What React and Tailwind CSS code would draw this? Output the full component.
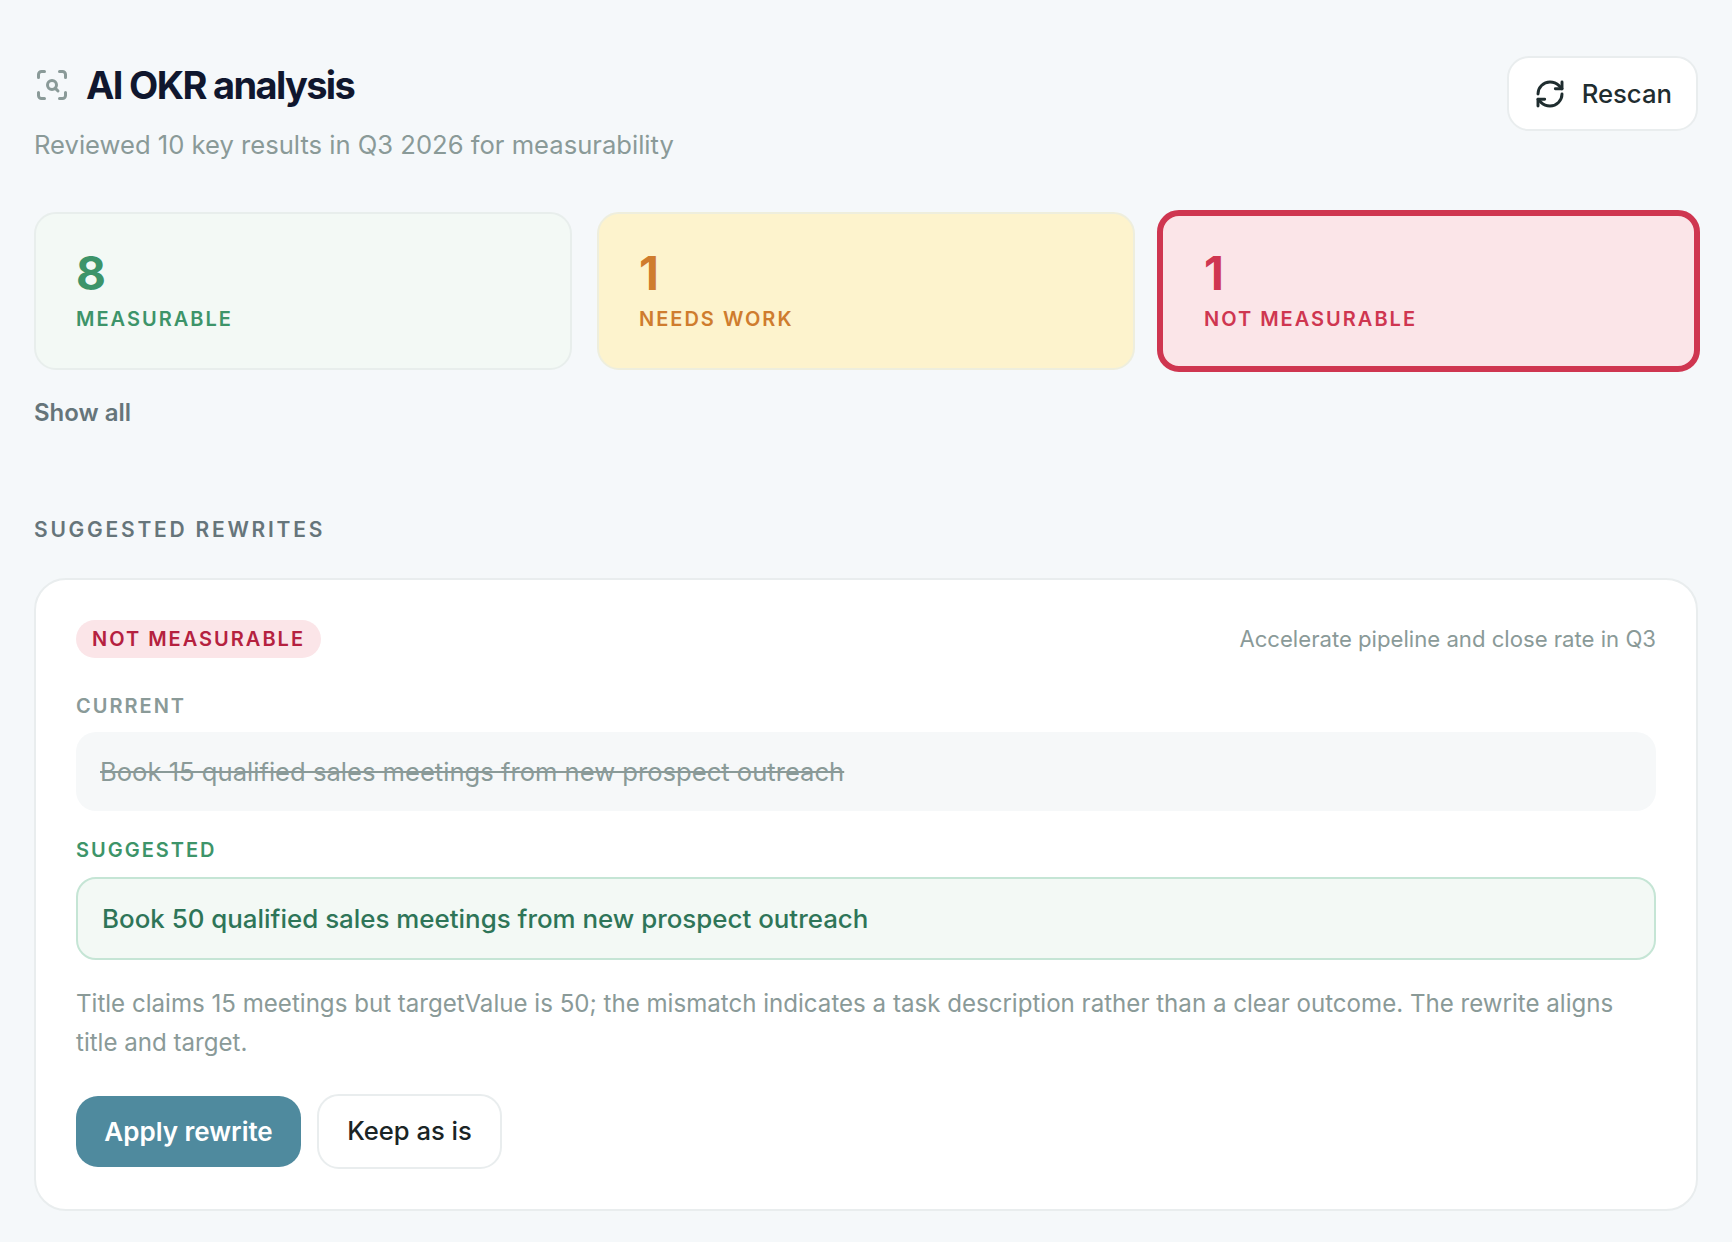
import React from "react";
import { RefreshCw, ScanSearch } from "lucide-react";

function Stat({ n, label, box, color }) {
  return (
    <div className={`flex flex-col rounded-[22px] ${box}`}>
      <div className={`text-[46px] leading-[58px] font-bold ${color}`}>{n}</div>
      <div className={`mt-[3px] text-[20px] leading-[28px] font-semibold tracking-[2px] ${color}`}>{label}</div>
    </div>
  );
}

export default function App() {
  return (
    <div className="min-h-[1242px] bg-[#f5f8fa] px-[34px] pt-[56px] font-['Inter',sans-serif]">
      <div className="flex items-start justify-between">
        <div>
          <div className="flex items-center gap-[16px] pt-[6px]">
            <ScanSearch size={36} strokeWidth={2} className="text-[#8a9a98]" />
            <h1 className="text-[38px] leading-[46px] font-bold tracking-[-1.65px] text-[#10172e]">AI OKR analysis</h1>
          </div>
          <p className="mt-[19px] text-[25.6px] leading-[36px] text-[#8a9a98]">Reviewed 10 key results in Q3 2026 for measurability</p>
        </div>
        <button className="flex h-[75px] items-center gap-[16px] rounded-[22px] border-2 border-[#e9edee] bg-white pt-[1px] pr-[24px] pl-[25px] text-[25.7px] font-medium text-[#1f2d2f]">
          <RefreshCw size={32} strokeWidth={2.2} />
          Rescan
        </button>
      </div>

      <div className="mt-[49px] grid grid-cols-3 gap-[25px]">
        <Stat n="8" label="MEASURABLE" box="h-[158px] border-2 border-[#e8eeec] bg-[#f3f9f5] px-[40px] pt-[30px]" color="text-[#3d9469]" />
        <Stat n="1" label="NEEDS WORK" box="h-[158px] border-2 border-[#eeeedd] bg-[#fdf3cd] px-[40px] pt-[30px]" color="text-[#cf7c2e]" />
        <Stat n="1" label="NOT MEASURABLE" box="-my-[2px] -mr-[2px] -ml-[3px] h-[162px] border-[6px] border-[#cf3650] bg-[#fbe5e8] pr-[40px] pl-[41px] pt-[28px]" color="text-[#cf3650]" />
      </div>

      <button className="mt-[26px] block text-[24px] leading-[34px] font-semibold text-[#66757a]">Show all</button>

      <h2 className="mt-[86px] text-[21px] leading-[28px] font-semibold tracking-[2.75px] text-[#66757a]">SUGGESTED REWRITES</h2>

      <div className="mt-[34px] rounded-[32px] border-2 border-[#e9edee] bg-white px-[40px] pt-[40px] pb-[40px]">
        <div className="flex items-center justify-between">
          <span className="rounded-full bg-[#fbe5e8] px-[16px] py-[4px] text-[20px] leading-[30px] font-semibold tracking-[2px] text-[#b5213f]">NOT MEASURABLE</span>
          <span className="text-[22.15px] leading-[32px] text-[#8a9a98]">Accelerate pipeline and close rate in Q3</span>
        </div>
        <div className="mt-[34px] text-[20px] leading-[28px] font-semibold tracking-[2px] text-[#8a9a98]">CURRENT</div>
        <div className="mt-[12px] flex h-[79px] items-center rounded-[20px] bg-[#f6f8f9] px-[24px] pt-[1px] text-[25.6px] text-[#8a9a98] line-through">Book 15 qualified sales meetings from new prospect outreach</div>
        <div className="mt-[25px] text-[20px] leading-[28px] font-semibold tracking-[2px] text-[#3d9469]">SUGGESTED</div>
        <div className="mt-[13px] flex h-[83px] items-center rounded-[20px] border-2 border-[#c5e5d5] bg-[#f3f9f5] px-[24px] pt-[1px] text-[25.9px] font-medium text-[#2e7558]">Book 50 qualified sales meetings from new prospect outreach</div>
        <p className="mt-[24px] text-[24.1px] leading-[39px] text-[#8a9a98]">Title claims 15 meetings but targetValue is 50; the mismatch indicates a task description rather than a clear outcome. The rewrite aligns title and target.</p>
        <div className="mt-[32px] flex items-center gap-[16px]">
          <button className="flex h-[71px] w-[225px] items-center justify-center rounded-[22px] bg-[#4f8a9e] text-[26px] font-semibold text-white">Apply rewrite</button>
          <button className="flex h-[75px] w-[185px] items-center justify-center rounded-[22px] border-2 border-[#e9edee] bg-white text-[25.6px] font-medium text-[#1a2425]">Keep as is</button>
        </div>
      </div>
    </div>
  );
}
